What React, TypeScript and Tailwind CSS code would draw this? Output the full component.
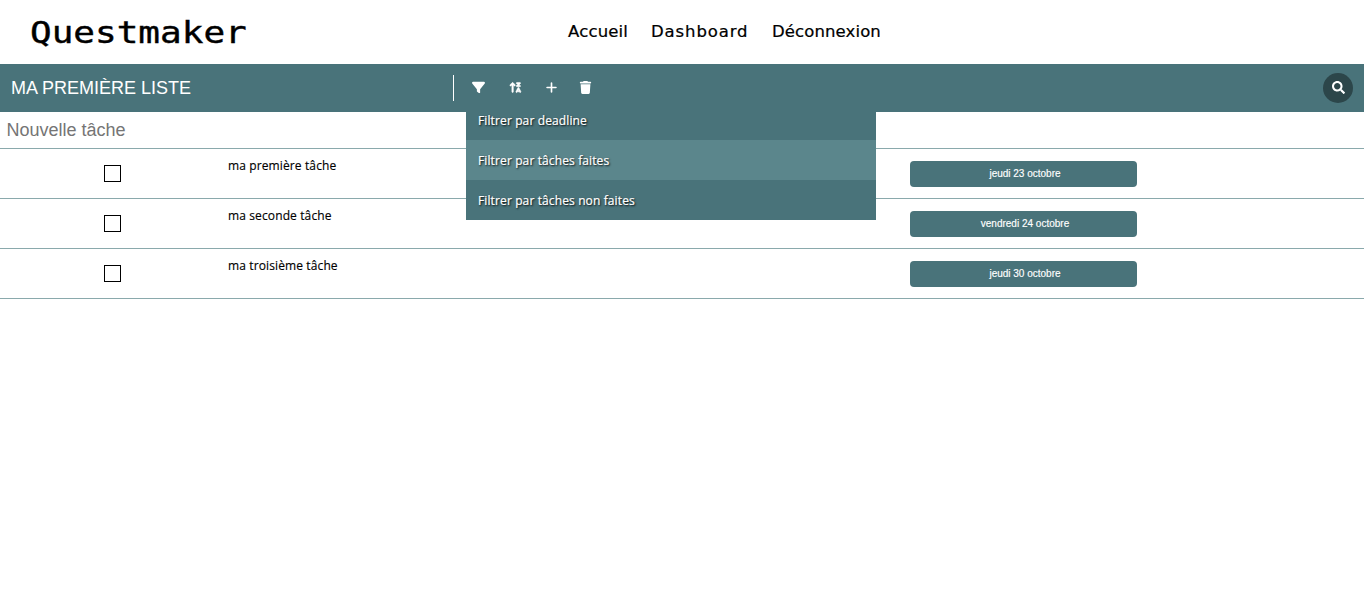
import type { ReactNode } from "react";
import { FaFilter, FaArrowUpZA, FaPlus, FaTrash } from "react-icons/fa6";
import { FaSearch } from "react-icons/fa";

const tasks = [
  { name: "ma première tâche", date: "jeudi 23 octobre" },
  { name: "ma seconde tâche", date: "vendredi 24 octobre" },
  { name: "ma troisième tâche", date: "jeudi 30 octobre" },
];

function ToolButton({ label, className, children }: { label: string; className: string; children: ReactNode }) {
  return (
    <button aria-label={label} className={`flex h-6 shrink-0 items-center justify-center ${className}`}>
      {children}
    </button>
  );
}

function Header() {
  return (
    <header className="flex h-16 items-center font-['DejaVu_Sans',sans-serif] text-black">
      <div className="w-[568px] pl-[30px]">
        <h1 className="w-[180px] origin-left scale-x-120 whitespace-nowrap pt-px font-['DejaVu_Sans_Mono',monospace] text-[30px] leading-9 [-webkit-text-stroke:0.4px_black]">
          Questmaker
        </h1>
      </div>
      <nav className="flex whitespace-nowrap text-[15px] leading-5 [-webkit-text-stroke:0.2px_black]">
        <a className="w-[83px] origin-left scale-x-110 tracking-[0.15px]">Accueil</a>
        <a className="w-[121px] origin-left scale-x-110 tracking-[0.8px]">Dashboard</a>
        <a className="origin-left scale-x-110 tracking-[0.1px]">Déconnexion</a>
      </nav>
    </header>
  );
}

function FilterMenu() {
  return (
    <ul className="absolute left-[466px] top-12 z-10 w-[410px] bg-[#49737a] font-['Open_Sans',sans-serif] text-[12px] tracking-[0.12px] text-white [-webkit-text-stroke:0.2px_white] [text-shadow:1px_1px_2px_black]">
      <li className="h-7 pl-3 leading-[18px]">Filtrer par deadline</li>
      <li className="h-10 bg-[#5b868c] pl-3 leading-[42px]">Filtrer par tâches faites</li>
      <li className="h-10 pl-3 leading-[42px]">Filtrer par tâches non faites</li>
    </ul>
  );
}

function Toolbar() {
  return (
    <div className="relative flex h-12 items-center bg-[#49737a] text-white">
      <h2 className="w-[453px] pl-[11px] text-[18px] leading-6">MA PREMIÈRE LISTE</h2>
      <div className="flex h-[26px] items-center border-l border-white pb-px pl-[18px]">
        <ToolButton label="Filtrer" className="w-[13px]">
          <FaFilter size={13} />
        </ToolButton>
        <ToolButton label="Trier" className="ml-6 w-[13px]">
          <FaArrowUpZA size={13} stroke="currentColor" strokeWidth={24} />
        </ToolButton>
        <ToolButton label="Ajouter" className="ml-[23px] w-[13px]">
          <FaPlus size={13} />
        </ToolButton>
        <ToolButton label="Supprimer" className="ml-[21px] w-[13px]">
          <FaTrash size={13} />
        </ToolButton>
      </div>
      <button
        aria-label="Rechercher"
        className="ml-auto mr-[11px] flex size-[30px] items-center justify-center rounded-full bg-[#2c464a] pb-px"
      >
        <FaSearch size={13} />
      </button>
      <FilterMenu />
    </div>
  );
}

export default function App() {
  return (
    <div className="min-h-[590px] bg-white font-['Liberation_Sans',Arial,sans-serif]">
      <Header />
      <Toolbar />
      <div className="h-[37px] border-b border-[#8aa9ac] pl-[6.5px]">
        <input
          placeholder="Nouvelle tâche"
          className="h-9 w-[440px] text-[18px] outline-none placeholder:text-[#757575]"
        />
      </div>
      <ul>
        {tasks.map((task) => (
          <li key={task.name} className="flex h-[50px] border-b border-[#8aa9ac]">
            <span className="w-[228px] pl-26 pt-4">
              <button
                role="checkbox"
                aria-checked={false}
                aria-label={task.name}
                className="block size-[17px] border border-black bg-white"
              />
            </span>
            <span className="w-[682px] pt-2 font-['Open_Sans',sans-serif] text-[12px] leading-[18px] tracking-[0.12px] text-black [-webkit-text-stroke:0.15px_black]">
              {task.name}
            </span>
            <button className="mt-3 h-[26px] w-[227px] rounded-[4px] bg-[#49737a] pb-px pl-[3px] text-[10px] text-white [-webkit-text-stroke:0.15px_white]">
              {task.date}
            </button>
          </li>
        ))}
      </ul>
    </div>
  );
}
